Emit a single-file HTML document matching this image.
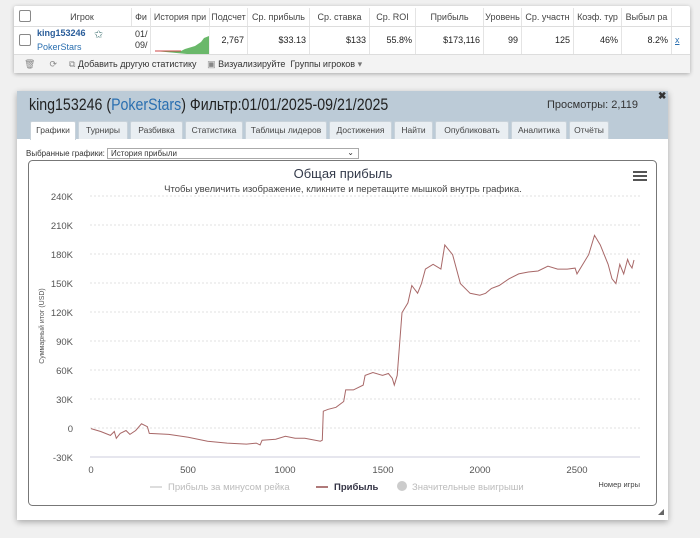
<!DOCTYPE html>
<html><head><meta charset="utf-8"><style>
*{box-sizing:border-box;margin:0;padding:0}
body{width:700px;height:538px;background:#f0f0f0;font-family:"Liberation Sans",sans-serif;position:relative;overflow:hidden;color:#333}
.abs{position:absolute}
.top{left:14px;top:6px;width:676px;height:67px;background:#fff;box-shadow:0 1px 4px rgba(0,0,0,.3);border-radius:2px}
.c{position:absolute;font-size:9px;white-space:nowrap;overflow:hidden}
.h{top:2px;height:18px;line-height:18px;text-align:center;color:#444;border-right:1px solid #e4e4e4}
.d{top:21px;height:27px;line-height:27px;text-align:right;padding-right:3px;border-right:1px solid #e4e4e4;color:#222}
.tb{left:0;top:48px;width:676px;height:19px;background:#f3f3f3;border-top:1px solid #ddd;font-size:9px;line-height:18px;color:#333}
.dlg{left:17px;top:91px;width:651px;height:429px;background:#fff;box-shadow:0 2px 6px rgba(0,0,0,.3)}
.hdr{left:0;top:0;width:651px;height:48px;background:#bccbd7}
.tab{position:absolute;top:30px;height:18px;background:#e9eef2;border:1px solid #c8d2da;border-bottom:none;font-size:8.5px;line-height:17px;text-align:center;color:#444;border-radius:2px 2px 0 0}
</style></head><body>
<div class="abs top">
 <div class="c" style="left:5px;top:4px;width:12px;height:12px;border:1px solid #888;border-radius:2px"></div>
 <div class="c h" style="left:19px;width:99px">Игрок</div>
 <div class="c h" style="left:118px;width:19px">Фи</div>
 <div class="c h" style="left:137px;width:59px">История при</div>
 <div class="c h" style="left:196px;width:38px">Подсчет</div>
 <div class="c h" style="left:234px;width:62px">Ср. прибыль</div>
 <div class="c h" style="left:296px;width:60px">Ср. ставка</div>
 <div class="c h" style="left:356px;width:46px">Ср. ROI</div>
 <div class="c h" style="left:402px;width:68px">Прибыль</div>
 <div class="c h" style="left:470px;width:38px">Уровень</div>
 <div class="c h" style="left:508px;width:52px">Ср. участн</div>
 <div class="c h" style="left:560px;width:48px">Коэф. тур</div>
 <div class="c h" style="left:608px;width:50px">Выбыл ра</div>
 <div class="c" style="left:0;top:20px;width:676px;border-top:1px solid #ddd"></div>
 <div class="c" style="left:5px;top:28px;width:12px;height:12px;border:1px solid #888;border-radius:2px"></div>
 <div class="c" style="left:23px;top:22px;font-weight:bold;color:#2a5d9a">king153246</div>
 <div class="c" style="left:23px;top:36px;color:#2a6fb0">PokerStars</div>
 <div class="c" style="left:80px;top:22px;color:#4a7a7a;font-size:11px">✩</div>
 <div class="c" style="left:118px;top:20px;width:19px;height:28px;border-right:1px solid #e4e4e4"></div>
 <div class="c" style="left:121px;top:23px;line-height:11px">01/<br>09/</div>
 <svg class="abs" style="left:137px;top:20px" width="59" height="28"><path d="M4 25 L30 25 L34 23 L44 20 L50 16 L53 12 L58 10 L58 28 L36 28 Z" fill="#6ab86a"/><path d="M4 25 L30 25" stroke="#c44" stroke-width="1"/><line x1="59" y1="0" x2="59" y2="28" stroke="#e4e4e4"/></svg>
 <div class="c d" style="left:196px;width:38px">2,767</div>
 <div class="c d" style="left:234px;width:62px">$33.13</div>
 <div class="c d" style="left:296px;width:60px">$133</div>
 <div class="c d" style="left:356px;width:46px">55.8%</div>
 <div class="c d" style="left:402px;width:68px">$173,116</div>
 <div class="c d" style="left:470px;width:38px">99</div>
 <div class="c d" style="left:508px;width:52px">125</div>
 <div class="c d" style="left:560px;width:48px">46%</div>
 <div class="c d" style="left:608px;width:50px">8.2%</div>
 <div class="c" style="left:661px;top:29px;color:#2a6fb0;text-decoration:underline">x</div>
 <div class="abs tb"><span style="margin-left:10px;color:#888">🗑</span><span style="margin-left:14px;color:#888">⟳</span><span style="margin-left:12px;color:#888">⧉</span> Добавить другую статистику <span style="margin-left:8px;color:#888">▣</span> Визуализируйте&nbsp; Группы игроков <span style="color:#777">▾</span></div>
</div>

<div class="abs dlg">
 <div class="abs hdr"></div>
 <div class="abs" style="left:12px;top:5px;font-size:16.5px;color:#222;transform:scaleX(0.86);transform-origin:0 0;white-space:nowrap">king153246 (<span style="color:#2a6fb0">PokerStars</span>) Фильтр:01/01/2025-09/21/2025</div>
 <div class="abs" style="left:530px;top:8px;font-size:11px;color:#333">Просмотры: 2,119</div>
 <div class="abs" style="left:641px;top:0;font-size:10px;font-weight:bold">✖</div>
 <div class="tab" style="left:13px;width:46px;background:#fff;height:19px">Графики</div>
 <div class="tab" style="left:61px;width:50px">Турниры</div>
 <div class="tab" style="left:113px;width:53px">Разбивка</div>
 <div class="tab" style="left:168px;width:58px">Статистика</div>
 <div class="tab" style="left:228px;width:82px">Таблицы лидеров</div>
 <div class="tab" style="left:312px;width:63px">Достижения</div>
 <div class="tab" style="left:377px;width:39px">Найти</div>
 <div class="tab" style="left:418px;width:74px">Опубликовать</div>
 <div class="tab" style="left:494px;width:56px">Аналитика</div>
 <div class="tab" style="left:552px;width:40px">Отчёты</div>
 <div class="abs" style="left:9px;top:58px;font-size:8px">Выбранные графики:</div>
 <div class="abs" style="left:90px;top:57px;width:252px;height:11px;border:1px solid #aaa;font-size:8px;line-height:10px;padding-left:3px">История прибыли<span style="position:absolute;right:4px;top:-1px;font-size:8px">⌄</span></div>
</div>

<svg class="abs" style="left:0;top:0" width="700" height="538" font-family="Liberation Sans, sans-serif">
 <rect x="28.5" y="160.5" width="628" height="345" rx="4" fill="#fff" stroke="#777"/>
 <text x="343" y="178" font-size="13" fill="#333a4a" text-anchor="middle">Общая прибыль</text>
 <text x="343" y="192" font-size="9.5" fill="#444" text-anchor="middle">Чтобы увеличить изображение, кликните и перетащите мышкой внутрь графика.</text>
 <g stroke="#555" stroke-width="2"><line x1="633" y1="172" x2="647" y2="172"/><line x1="633" y1="176" x2="647" y2="176"/><line x1="633" y1="180" x2="647" y2="180"/></g>
 <g stroke="#e0e0e0" stroke-dasharray="2,2">
  <line x1="90" y1="196" x2="640" y2="196"/><line x1="90" y1="225" x2="640" y2="225"/><line x1="90" y1="254" x2="640" y2="254"/><line x1="90" y1="283" x2="640" y2="283"/><line x1="90" y1="312" x2="640" y2="312"/><line x1="90" y1="341" x2="640" y2="341"/><line x1="90" y1="370" x2="640" y2="370"/><line x1="90" y1="399" x2="640" y2="399"/><line x1="90" y1="428" x2="640" y2="428"/>
 </g>
 <line x1="90" y1="457" x2="640" y2="457" stroke="#ccd"/>
 <g font-size="9.5" fill="#555" text-anchor="end">
  <text x="73" y="200">240K</text><text x="73" y="229">210K</text><text x="73" y="258">180K</text><text x="73" y="287">150K</text><text x="73" y="316">120K</text><text x="73" y="345">90K</text><text x="73" y="374">60K</text><text x="73" y="403">30K</text><text x="73" y="432">0</text><text x="73" y="461">-30K</text>
 </g>
 <text transform="translate(44,326) rotate(-90)" font-size="7" fill="#555" text-anchor="middle">Суммарный итог (USD)</text>
 <g font-size="9.5" fill="#555" text-anchor="middle">
  <text x="91" y="473">0</text><text x="188" y="473">500</text><text x="285" y="473">1000</text><text x="383" y="473">1500</text><text x="480" y="473">2000</text><text x="577" y="473">2500</text>
 </g>
 <text x="640" y="487" font-size="7.5" fill="#444" text-anchor="end">Номер игры</text>
 <line x1="150" y1="487" x2="162" y2="487" stroke="#ddd" stroke-width="2"/>
 <text x="168" y="490" font-size="9.5" fill="#bbb">Прибыль за минусом рейка</text>
 <line x1="316" y1="487" x2="328" y2="487" stroke="#b07a7a" stroke-width="2"/>
 <text x="334" y="490" font-size="9.5" fill="#334" font-weight="bold">Прибыль</text>
 <circle cx="402" cy="486" r="5" fill="#ccc"/>
 <text x="412" y="490" font-size="9.5" fill="#bbb">Значительные выигрыши</text>
 <polyline fill="none" stroke="#a86868" stroke-width="1" points="91,428.6 100.7,431.5 110.4,435.4 114.3,431.5 116.3,438.3 120.2,433.4 126,430.5 129.9,434.4 135.7,430.5 141.5,423.8 147.4,426.7 149.3,433.4 168.8,434.4 188.2,437.3 207.6,441.2 227.1,443.1 246.5,444.1 256.2,443.1 260.1,445 262.1,440.2 275.7,439.2 285.4,436.3 295.1,438.3 304.8,438.3 320.4,441.2 322.3,440.2 323.3,411.2 328.2,409.3 336,407.3 343.7,401.5 345.7,389.9 353.4,389.9 363.2,385.1 365.1,375.4 372.9,372.5 382.6,375.4 388.4,373.5 392.3,378.3 394.3,385.1 397.2,375.4 402,312.6 407.9,302.9 411.8,285.5 417.6,293.2 421.5,283.5 425.4,269.1 433.1,264.3 440.9,269.1 444.8,244.9 448.7,249.8 452.6,254.6 460.4,283.6 470.1,293.3 479.8,295.2 485.6,293.3 491.5,288.4 499.2,285.5 509,278.8 518.7,273.9 528.4,272 538.1,271 547.9,266.2 557.6,269.1 567.3,269.1 575.1,268.1 577,273.9 588.7,254.6 594.5,235.3 600.3,245 608.1,264.3 612,278.8 615.9,283.6 619.8,264.3 623.7,273.9 627.6,259.4 629.5,264.3 632,268 634,260"/>
 <path d="M664 515 L664 509 L658 515 Z" fill="#666"/>
</svg>
</body></html>
